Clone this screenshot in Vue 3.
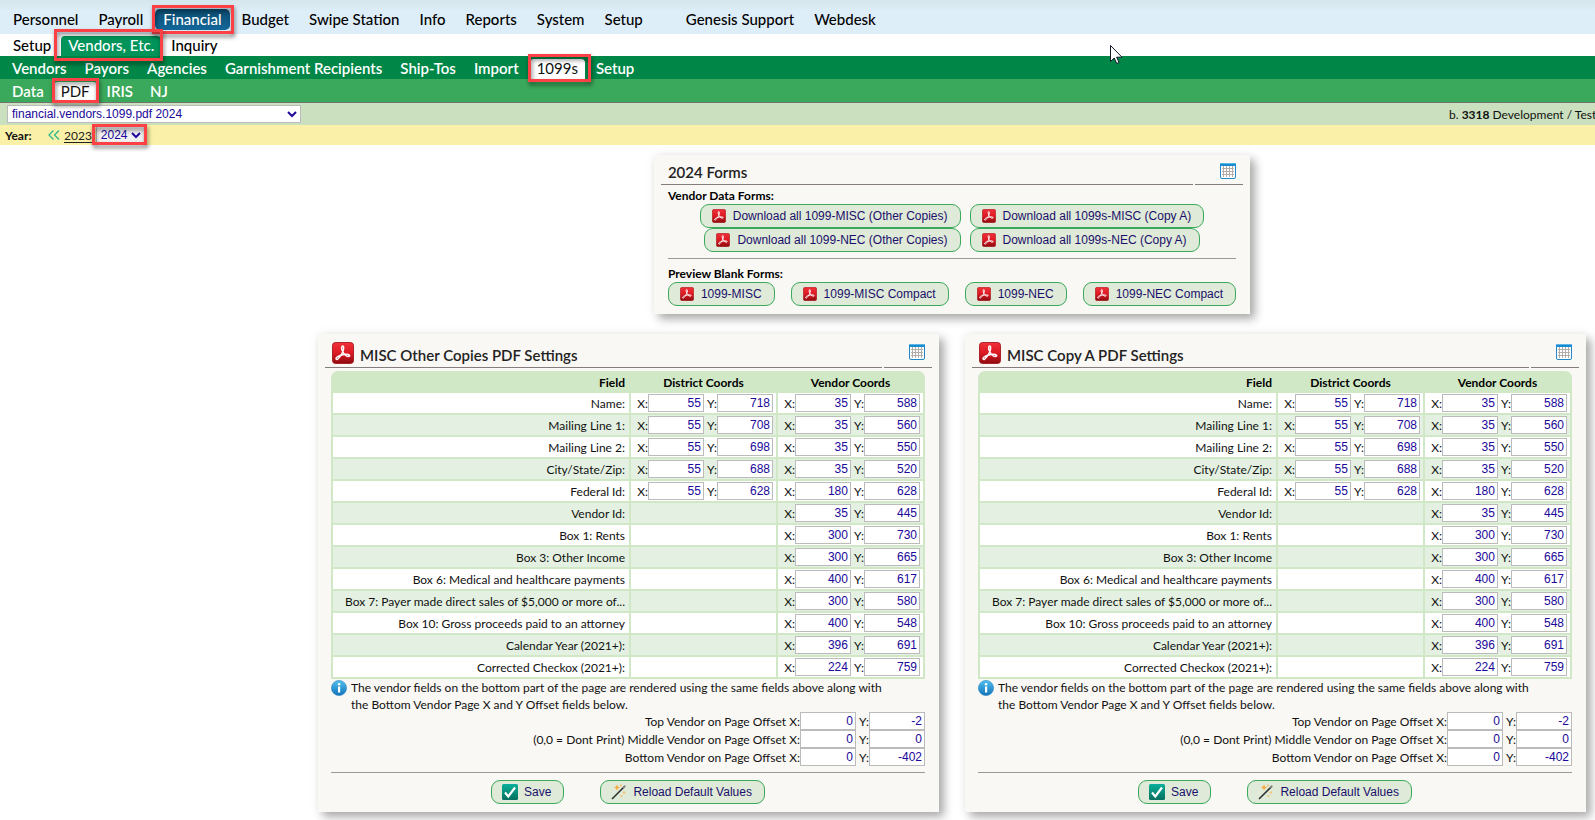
<script setup>
import { reactive, ref } from 'vue'

const areas = [
  { name: 'Personnel' }, { name: 'Payroll' }, { name: 'Financial', active: true },
  { name: 'Budget' }, { name: 'Swipe Station' }, { name: 'Info' }, { name: 'Reports' },
  { name: 'System' }, { name: 'Setup' }, { name: 'Genesis Support', apart: true }, { name: 'Webdesk' },
]
const sections = [{ name: 'Setup' }, { name: 'Vendors, Etc.', active: true }, { name: 'Inquiry' }]
const pages = [
  { name: 'Vendors' }, { name: 'Payors' }, { name: 'Agencies' }, { name: 'Garnishment Recipients' },
  { name: 'Ship-Tos' }, { name: 'Import' }, { name: '1099s', active: true }, { name: 'Setup' },
]
const tabs = [{ name: 'Data' }, { name: 'PDF', active: true }, { name: 'IRIS' }, { name: 'NJ' }]

const location = ref('financial.vendors.1099.pdf 2024')
const year = ref('2024')

const downloads = [
  'Download all 1099-MISC (Other Copies)', 'Download all 1099s-MISC (Copy A)',
  'Download all 1099-NEC (Other Copies)', 'Download all 1099s-NEC (Copy A)',
]
const previews = ['1099-MISC', '1099-MISC Compact', '1099-NEC', '1099-NEC Compact']

const makeFields = () => [
  { label: 'Name:', district: [55, 718], vendor: [35, 588] },
  { label: 'Mailing Line 1:', district: [55, 708], vendor: [35, 560] },
  { label: 'Mailing Line 2:', district: [55, 698], vendor: [35, 550] },
  { label: 'City/State/Zip:', district: [55, 688], vendor: [35, 520] },
  { label: 'Federal Id:', district: [55, 628], vendor: [180, 628] },
  { label: 'Vendor Id:', vendor: [35, 445] },
  { label: 'Box 1: Rents', vendor: [300, 730] },
  { label: 'Box 3: Other Income', vendor: [300, 665] },
  { label: 'Box 6: Medical and healthcare payments', vendor: [400, 617] },
  { label: 'Box 7: Payer made direct sales of $5,000 or more of...', vendor: [300, 580] },
  { label: 'Box 10: Gross proceeds paid to an attorney', vendor: [400, 548] },
  { label: 'Calendar Year (2021+):', vendor: [396, 691] },
  { label: 'Corrected Checkox (2021+):', vendor: [224, 759] },
]
const makeOffsets = () => [
  { label: 'Top Vendor on Page Offset X:', at: [0, -2] },
  { label: '(0,0 = Dont Print) Middle Vendor on Page Offset X:', at: [0, 0] },
  { label: 'Bottom Vendor on Page Offset X:', at: [0, -402] },
]
const panels = reactive([
  { title: 'MISC Other Copies PDF Settings', fields: makeFields(), offsets: makeOffsets() },
  { title: 'MISC Copy A PDF Settings', fields: makeFields(), offsets: makeOffsets() },
])
</script>

<template>
  <div class="page">
    <svg class="defs" width="0" height="0" aria-hidden="true">
      <defs>
        <linearGradient id="g-red" x1="0" y1="0" x2="0" y2="1">
          <stop offset="0" stop-color="#f0303a" /><stop offset=".5" stop-color="#dc1a24" /><stop offset="1" stop-color="#8e0a10" />
        </linearGradient>
        <linearGradient id="g-blue" x1="0" y1="0" x2="0" y2="1">
          <stop offset="0" stop-color="#4fc0f0" /><stop offset="1" stop-color="#1373b8" />
        </linearGradient>
        <linearGradient id="g-teal" x1="0" y1="0" x2="0" y2="1">
          <stop offset="0" stop-color="#08b09a" /><stop offset="1" stop-color="#08705f" />
        </linearGradient>
      </defs>
      <symbol id="i-pdf" viewBox="0 0 24 24">
        <rect x=".5" y=".5" width="23" height="23" rx="3.500" fill="url(#g-red)" stroke="#a3161c" />
        <path d="M4.700 18.800c-1.200-1.300 1-3.200 5-4.300s7.800-1.500 9.200-.2-1 2.200-3.400.8-5-5.700-5-8.600 2.200-3 2.200 0-2.200 7-4.400 9.900-2.900 3-3.600 2.400z" fill="none" stroke="#fff" stroke-width="1.600" stroke-linejoin="round" />
      </symbol>
      <symbol id="i-cal" viewBox="0 0 16 16">
        <rect x=".5" y=".5" width="15" height="15" rx="1.500" fill="#fff" stroke="#2187c8" />
        <path d="M2 5.500h12M2 8.500h12M2 11.500h12M3.500 3v11M6.500 3v11M9.500 3v11M12.500 3v11" stroke="#b3aca8" fill="none" />
        <path d="M1 0h14a1 1 0 0 1 1 1v2H0V1a1 1 0 0 1 1-1z" fill="#1b8bd0" />
        <path d="M0 1a1 1 0 0 1 1-1h14a1 1 0 0 1 1 1z" fill="#5ab8e8" />
      </symbol>
      <symbol id="i-info" viewBox="0 0 16 16">
        <circle cx="8" cy="8" r="7.600" fill="url(#g-blue)" stroke="#2a86c4" stroke-width=".6" />
        <rect x="7" y="6.500" width="2.200" height="6" fill="#fff" /><circle cx="8.100" cy="4.200" r="1.300" fill="#fff" />
      </symbol>
      <symbol id="i-check" viewBox="0 0 16 16">
        <rect width="16" height="16" rx="1.500" fill="url(#g-teal)" />
        <path d="M3 8.500l3.300 4L13 3.500" fill="none" stroke="#fff" stroke-width="2.200" />
      </symbol>
      <symbol id="i-wand" viewBox="0 0 16 16">
        <path d="M1 15L14 2" stroke="#333" stroke-width="1.600" />
        <path d="M12 4l2.200-2.200" stroke="#888" stroke-width="1.600" />
        <path d="M6 .5l.9 2.100 2.100.9-2.100.9L6 6.500l-.9-2.100L3 3.500l2.100-.9z" fill="#f7a83a" />
        <path d="M13 6.500l.6 1.400 1.400.6-1.400.6-.6 1.400-.6-1.400-1.400-.6 1.400-.6z" fill="#f9bd6a" />
        <circle cx="10" cy="1.500" r=".9" fill="#f7b55c" /><circle cx="10.500" cy="12" r=".9" fill="#f7b55c" />
      </symbol>
    </svg>

    <nav class="bar areas" aria-label="Areas">
      <a v-for="a in areas" :key="a.name" href="#" :class="{ active: a.active, apart: a.apart }">{{ a.name }}</a>
    </nav>
    <nav class="bar sections" aria-label="Sections">
      <a v-for="s in sections" :key="s.name" href="#" :class="{ active: s.active }">{{ s.name }}</a>
    </nav>
    <nav class="bar pages" aria-label="Pages">
      <a v-for="p in pages" :key="p.name" href="#" :class="{ active: p.active }">{{ p.name }}</a>
    </nav>
    <nav class="bar tabs" aria-label="Tabs">
      <a v-for="t in tabs" :key="t.name" href="#" :class="{ active: t.active }">{{ t.name }}</a>
    </nav>

    <div class="crumb">
      <span class="pick wide">
        <select v-model="location" aria-label="Location"><option>financial.vendors.1099.pdf 2024</option></select>
        <svg viewBox="0 0 10 7" width="10" height="7" aria-hidden="true"><path d="M1 1l4 4 4-4" /></svg>
      </span>
      <span class="site">b. <b>3318</b> Development / Test</span>
    </div>

    <div class="years">
      <label class="cap" for="year">Year:</label>
      <a class="prev" href="#" aria-label="Earlier years">
        <svg viewBox="0 0 12 10" width="12" height="10"><path d="M5.500.5L1 5l4.500 4.500M11 .5L6.500 5 11 9.500" fill="none" stroke="#2fb890" stroke-width="1.300" /></svg>
      </a>
      <a class="y" href="#">2023</a>
      <span class="pick short">
        <select id="year" v-model="year"><option>2024</option></select>
        <svg viewBox="0 0 10 7" width="10" height="7" aria-hidden="true"><path d="M1 1l4 4 4-4" /></svg>
      </span>
    </div>

    <main>
      <section class="card forms">
        <header>
          <h2>2024 Forms</h2>
          <div class="tools"><svg width="16" height="16"><use href="#i-cal" /></svg></div>
        </header>
        <div class="body">
          <h3>Vendor Data Forms:</h3>
          <div class="downloads">
            <button v-for="d in downloads" :key="d" type="button"><svg width="14" height="14"><use href="#i-pdf" /></svg>{{ d }}</button>
          </div>
          <hr>
          <h3>Preview Blank Forms:</h3>
          <div class="previews">
            <button v-for="p in previews" :key="p" type="button"><svg width="14" height="14"><use href="#i-pdf" /></svg>{{ p }}</button>
          </div>
        </div>
      </section>

      <div class="settings">
        <section v-for="panel in panels" :key="panel.title" class="card">
          <header class="tall">
            <h2><svg width="22" height="22"><use href="#i-pdf" /></svg>{{ panel.title }}</h2>
            <div class="tools"><svg width="16" height="16"><use href="#i-cal" /></svg></div>
          </header>
          <div class="body">
            <table>
              <thead>
                <tr><th class="name">Field</th><th class="coords">District Coords</th><th class="coords">Vendor Coords</th></tr>
              </thead>
              <tbody>
                <tr v-for="f in panel.fields" :key="f.label">
                  <td class="name">{{ f.label }}</td>
                  <td v-for="kind in ['district', 'vendor']" :key="kind">
                    <div v-if="f[kind]" class="pair">
                      <label>X:<input v-model="f[kind][0]" type="text"></label>
                      <label>Y:<input v-model="f[kind][1]" type="text"></label>
                    </div>
                  </td>
                </tr>
              </tbody>
            </table>
            <div class="note">
              <svg width="16" height="16"><use href="#i-info" /></svg>
              <p>The vendor fields on the bottom part of the page are rendered using the same fields above along with<br>the Bottom Vendor Page X and Y Offset fields below.</p>
            </div>
            <div v-for="o in panel.offsets" :key="o.label" class="pair offset">
              <label>{{ o.label }}<input v-model="o.at[0]" type="text"></label>
              <label>Y:<input v-model="o.at[1]" type="text"></label>
            </div>
            <hr>
            <div class="actions">
              <button type="button"><svg width="16" height="16"><use href="#i-check" /></svg>Save</button>
              <button type="button"><svg width="16" height="16"><use href="#i-wand" /></svg>Reload Default Values</button>
            </div>
          </div>
        </section>
      </div>
    </main>

    <svg class="pointer" viewBox="0 0 13 20" width="13" height="20" aria-hidden="true">
      <path d="M.5.5v16l3.700-3.500 2.600 5.500 2.300-1-2.500-5.300h5.400z" fill="#fff" stroke="#111827" />
    </svg>
  </div>
</template>

<style>
body { background: #fff; }
</style>

<style scoped>
.page {
  position: relative;
  overflow: hidden;
  padding-bottom: 8px;
  font: 12px/17px Lato, "Open Sans", sans-serif;
  color: #111;
}
.defs { position: absolute; }

.bar {
  display: flex;
  gap: 3px;
  padding-left: 5px;
  font-size: 15px;
  font-weight: 500;
}
.bar a {
  position: relative;
  padding: 0 7px;
  color: #000;
  text-decoration: none;
  white-space: nowrap;
}
.areas {
  gap: 4px;
  height: 25px;
  padding-top: 9px;
  background: linear-gradient(#d5e7ec, #deeef9 12px, #deeef9);
}
.areas a { height: 21px; padding: 0 8px; line-height: 21px; }
.areas .active {
  border-radius: 5px;
  background: linear-gradient(#0b4c70, #13679a);
  color: #fff;
}
.areas .apart { margin-left: 23px; }
.sections { height: 22px; padding-left: 6px; }
.sections a { line-height: 22px; }
.sections .active {
  height: 20px;
  margin-top: 2px;
  border-radius: 4px 4px 0 0;
  background: #00945a;
  color: #fff;
  line-height: 18px;
}
.pages, .tabs { height: 23px; }
.pages { gap: 4px; background: #008748; }
.tabs { border-bottom: 1px solid #727272; background: #3ba95b; }
.pages a, .tabs a { color: #fff; font-weight: 600; line-height: 25px; }
.pages .active, .tabs .active {
  height: 20px;
  margin-top: 3px;
  border-radius: 4px 4px 0 0;
  background: #fff;
  color: #111;
  font-weight: 400;
  line-height: 19px;
}

.active::after, .short::after {
  content: "";
  position: absolute;
  z-index: 2;
  inset: -4px -4px -4px -3px;
  border: 3px solid #fb4146;
  filter: drop-shadow(1px 3px 2px rgba(0, 0, 0, .5));
  pointer-events: none;
}
.sections .active::after { inset: -7px -2px -5px -7px; }
.pages .active::after { inset: -5px -6px -3px -2px; }
.tabs .active::after { inset: -4px -2px -1px -2px; }

.crumb, .years { display: flex; align-items: center; }
.crumb { height: 22px; padding-left: 7px; background: #cbe0be; }
.site { flex: 0 0 146px; margin-left: auto; overflow: hidden; white-space: nowrap; }
.years { height: 20px; padding-left: 5px; background: #faf0a7; }
.cap { width: 43px; font-weight: 700; }
.prev { display: flex; width: 16px; }
.y { color: #222; text-underline-offset: 2px; }

.pick { position: relative; display: flex; align-items: center; }
.pick svg { position: absolute; right: 4px; fill: none; stroke: #20089a; stroke-width: 2; pointer-events: none; }
.pick select {
  width: 100%;
  height: 18px;
  margin: 0;
  padding: 0 4px;
  border: 1px solid #bbb;
  border-radius: 0;
  appearance: none;
  background: #fff;
  color: #20089a;
  font: 12px/16px "Liberation Sans", Arial, sans-serif;
}
.wide { width: 294px; }
.short { width: 49px; margin-left: 4px; }
.short select { background: #f1f1f1; }
.short::after { inset: -2px -2px -1px -4px; }

main { padding: 10px 9px 0 318px; }
.card {
  padding: 0 7px 8px;
  background: #f9f8f4;
  box-shadow: 5px 5px 9px rgba(0, 0, 0, .32), 0 0 12px rgba(0, 0, 0, .05);
}
.forms { width: fit-content; margin: 0 auto 20px; }
.settings { display: grid; grid-template-columns: 1fr 1fr; gap: 26px; }

header { display: flex; gap: 2px; height: 30px; }
header.tall { height: 34px; }
h2 {
  display: flex;
  flex: 1;
  align-items: flex-end;
  gap: 6px;
  margin: 0;
  padding: 0 0 3px 7px;
  border-bottom: 1px solid #857d7d;
  color: #222;
  font-size: 15px;
  font-weight: 600;
  line-height: 18px;
}
.tools {
  display: flex;
  align-items: flex-start;
  justify-content: flex-end;
  width: 41px;
  padding: 8px 7px 0 0;
  border-bottom: 1px solid #857d7d;
}
.tall .tools { padding-top: 10px; }
.forms .body { padding: 0 7px; }
.settings .body { padding: 3px 7px 0 6px; }
.tall h2 { padding-left: 7px; }
h3 { margin: 0; padding-top: 2px; color: #000; font-size: 12px; font-weight: 700; line-height: 17px; }
hr { height: 1px; margin: 6px 0; border: 0; background: #999; }
.forms hr { margin-bottom: 4px; }

button {
  display: inline-flex;
  align-items: center;
  gap: 7px;
  height: 24px;
  padding: 0 12px 0 11px;
  border: 1px solid #3ba95b;
  border-radius: 9px;
  background: #dfead8;
  color: #1b0f6b;
  font: 12px/16px "Liberation Sans", Arial, sans-serif;
  white-space: nowrap;
}
.downloads {
  display: grid;
  grid-template-columns: auto auto;
  justify-content: center;
  column-gap: 9px;
}
.downloads button:nth-child(odd) { justify-self: end; }
.downloads button:nth-child(even) { justify-self: start; }
.previews { display: flex; gap: 16px; }
.actions { display: flex; justify-content: center; gap: 36px; margin-top: 7px; }
.actions button { gap: 6px; padding: 0 12px 0 10px; }

table {
  width: 100%;
  border-spacing: 2px;
  border-radius: 7px 7px 0 0;
  background: #d0e8c5;
  table-layout: fixed;
}
th, td { padding: 0; }
th { height: 18px; color: #000; font-weight: 700; }
.coords { width: 145px; }
.name { padding-right: 4px; text-align: right; white-space: nowrap; }
td { height: 20px; background: #fff; }
tr:nth-child(even) td { background: #e4f1e2; }
.pair { display: flex; justify-content: flex-end; gap: 3px; padding-right: 3px; }
.pair label { display: flex; align-items: center; }
input {
  box-sizing: border-box;
  width: 56px;
  height: 18px;
  padding: 0 2px;
  border: 1px solid #bbb;
  background: #fff;
  color: #20089a;
  font: 12px/16px "Liberation Sans", Arial, sans-serif;
  text-align: right;
}
.note { display: flex; gap: 4px; margin-bottom: -1px; }
.note svg { flex: none; margin-top: 1px; }
.note p { margin: 0; }
.offset { padding: 0; }
.offset label { white-space: nowrap; }

.pointer { position: absolute; z-index: 3; top: 45px; left: 1110px; }
</style>
